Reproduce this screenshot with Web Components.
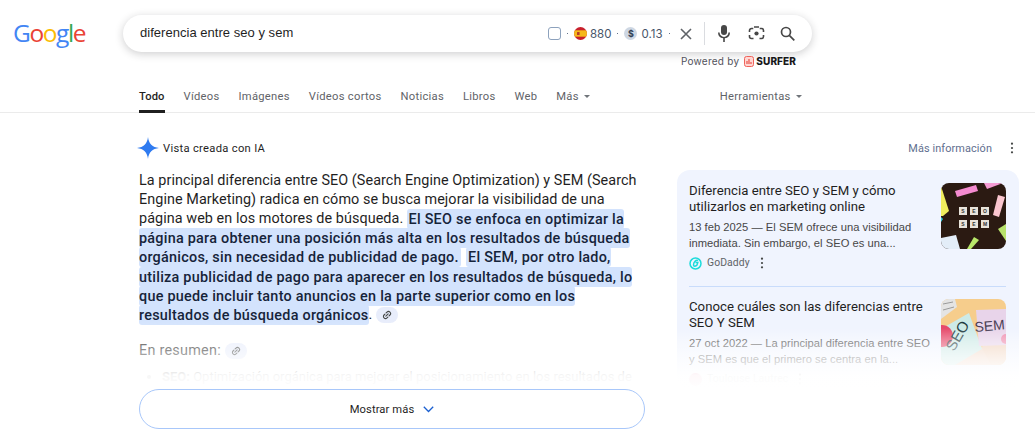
<!DOCTYPE html>
<html lang="es"><head><meta charset="utf-8"><title>diferencia entre seo y sem</title>
<style>
html,body{margin:0;padding:0;background:#fff}
body{width:1035px;height:440px;overflow:hidden;font-family:"Liberation Sans",Arial,sans-serif;color:#1f1f1f}
</style></head><body>
<g-header></g-header>
<g-tabs></g-tabs>
<g-main-row></g-main-row>
<script>
function def(name,html){customElements.define(name,class extends HTMLElement{constructor(){super();const s=this.attachShadow({mode:'open'});s.innerHTML=html;}});}
const LINK='<svg viewBox="0 0 24 24" width="10" height="10" fill="none" stroke="currentColor" stroke-width="2.6" stroke-linecap="round"><g transform="rotate(-45 12 12)"><path d="M10 7H7a5 5 0 0 0 0 10h3"/><path d="M14 7h3a5 5 0 0 1 0 10h-3"/><path d="M8 12h8"/></g></svg>';
const DOTS='<svg viewBox="0 0 4 14" width="4" height="12" fill="currentColor"><circle cx="2" cy="2" r="1.3"/><circle cx="2" cy="7" r="1.3"/><circle cx="2" cy="12" r="1.3"/></svg>';

def('g-logo',`<style>:host{display:block;width:72px;margin-left:-1px;font:500 24.500px/30px "Open Sans",sans-serif;letter-spacing:-1.400px;white-space:nowrap}</style><span style="color:#4285f4">G</span><span style="color:#ea4335">o</span><span style="color:#fbbc05">o</span><span style="color:#4285f4">g</span><span style="color:#34a853">l</span><span style="color:#ea4335">e</span>`);

def('g-search',`<style>
:host{display:flex;align-items:center;width:689px;height:37px;box-sizing:border-box;border-radius:19px;background:#fff;box-shadow:0 2px 8px rgba(32,33,36,.22);padding:0 0 0 17px}
.q{width:408px;font:13px "Liberation Sans",sans-serif;color:#1f1f1f;margin-top:-2px;letter-spacing:.03px}
.m{display:flex;align-items:center;font:11.500px Inter,sans-serif;color:#475569}
.box{width:13px;height:13px;box-sizing:border-box;border:1px solid #8da2bd;border-radius:3px}
.d{width:1px;height:1px;background:#64748b;margin:0 6px}
.coin{width:13px;height:13px;border-radius:50%;background:#ced7e3;color:#334155;font:700 9px/13px Inter,sans-serif;text-align:center;margin-right:4px}
.flag{width:13px;height:13px;border-radius:50%;margin-right:3px;display:block}
.x{display:block}
.sep{width:1px;height:23px;background:#dadce0;margin:0 12px 0 11px}
.i{display:block}
</style>
<div class="q">diferencia entre seo y sem</div>
<div class="m"><span class="box"></span><span class="d"></span>
<svg class="flag" viewBox="0 0 13 13"><rect width="13" height="13" fill="#c8202c"/><rect y="3.3" width="13" height="6.4" fill="#f5b81c"/><rect x="3" y="5" width="2.6" height="3" rx=".6" fill="#b5392b"/></svg>
<span>880</span><span class="d"></span><span class="coin">$</span><span>0.13</span><span class="d" style="margin-right:9px"></span></div>
<svg class="x" width="14" height="14" viewBox="0 0 14 14" stroke="#5f6368" stroke-width="1.600" fill="none"><path d="M2 2l10 10M12 2L2 12"/></svg>
<span class="sep"></span>
<svg class="i" width="14" height="17" viewBox="0 0 14 17" fill="#474747"><rect x="4" y="0" width="6" height="10" rx="3"/><path d="M1 7.500h1.600a4.400 4.400 0 0 0 8.800 0H13a6 6 0 0 1-5.200 5.800V17H6.200v-3.700A6 6 0 0 1 1 7.500z"/></svg>
<svg class="i" style="margin-left:17px" width="17" height="17" viewBox="0 0 17 17" fill="none" stroke="#474747" stroke-width="1.600"><path d="M1.500 7V5.500a2 2 0 0 1 2-2h1.800M6 2h5M11.700 3.500h1.800a2 2 0 0 1 2 2V7M1.500 10v1.500a2 2 0 0 0 2 2h2M15.500 10v1.500a2 2 0 0 1-2 2h-2"/><circle cx="8.500" cy="8.500" r="2.100" fill="#474747" stroke="none"/></svg>
<svg class="i" style="margin-left:15px" width="15" height="15" viewBox="0 0 15 15" fill="none" stroke="#474747" stroke-width="1.700"><circle cx="6" cy="6" r="4.500"/><path d="M9.300 9.300L14.300 14.300"/></svg>`);

def('g-powered',`<style>:host{display:flex;align-items:center;justify-content:flex-end;width:689px;height:18px;font:10px/18px Inter,sans-serif;color:#52525b;letter-spacing:.25px;box-sizing:border-box;padding-right:16px}
svg{margin:0 2px 0 5px}b{font:800 10px Inter,sans-serif;color:#18181b;letter-spacing:.1px}</style>
Powered by<svg width="10" height="11" viewBox="0 0 10 11"><rect x=".5" y=".5" width="9" height="10" rx="2" fill="#ffd7d3" stroke="#f0625a"/><path d="M3 8V5M5 8V3M7 8V6" stroke="#e8483f" stroke-width="1.100"/></svg><b>SURFER</b>`);

def('g-header',`<style>:host{display:flex;align-items:flex-start;height:75px;box-sizing:border-box;padding:15px 0 0 14px;gap:38px}
g-logo{margin-top:3px}.c{display:flex;flex-direction:column}</style>
<g-logo></g-logo><div class="c"><g-search></g-search><g-powered></g-powered></div>`);

def('g-tabs',`<style>:host{display:flex;height:38px;box-sizing:border-box;border-bottom:1px solid #ebebeb;padding-left:139px;font:11.200px "Roboto",sans-serif;color:#5f6368;letter-spacing:.28px}
span{display:block;padding-top:15px;margin-right:19px;white-space:nowrap}
.on{color:#1f1f1f;font-weight:500;border-bottom:3px solid #1f1f1f;height:20px;letter-spacing:.12px}
.car{display:inline-block;border:3px solid transparent;border-top:3.500px solid #70757a;border-bottom:0;margin-left:5px;vertical-align:2px}
.t{margin-left:111px;margin-right:0}</style>
<span class="on">Todo</span><span>Vídeos</span><span>Imágenes</span><span>Vídeos cortos</span><span>Noticias</span><span>Libros</span><span>Web</span><span>Más<i class="car"></i></span><span class="t">Herramientas<i class="car"></i></span>`);

def('g-chip',`<style>:host{display:inline-flex;align-items:center;justify-content:center;width:22px;height:16px;border-radius:8px;background:#e8edfb;color:#444746;vertical-align:-1px;margin-left:4px}</style>${LINK}`);

def('g-answer',`<style>
:host{display:block;position:relative;width:506px;height:304px;box-sizing:border-box}
.h{display:flex;align-items:center;height:24px;font:400 11.200px Roboto,sans-serif;color:#1f1f1f;letter-spacing:.3px;gap:3px;margin-left:-3px}
.t{margin-top:11px;font:14.400px/19.200px "Roboto",sans-serif;color:#1f1f1f;white-space:nowrap;letter-spacing:.06px}
mark{background:#d3e3fd;color:#16243a;border-radius:3px;padding:1.500px 0;font-weight:475;letter-spacing:.25px}
.a{margin-left:-4px;padding-left:2px}.b{padding-right:2px}.c{margin-left:-2px;padding-left:2px}
.g{margin-top:16px;color:#1f1f1f;font:14.400px/19.200px Roboto,sans-serif;letter-spacing:.25px}
ul{margin:7px 0 0;padding:0 0 0 23px;font:13px/19.200px Roboto,sans-serif;white-space:nowrap}
.fade{position:absolute;left:-4px;right:-4px;top:184px;height:120px;background:linear-gradient(to bottom,rgba(255,255,255,0) 0,rgba(255,255,255,.5) 25%,rgba(255,255,255,.96) 46%,#fff 60%)}
::slotted(g-more){position:absolute;left:0;right:0;bottom:11px}
</style>
<div class="h"><svg width="24" height="24" viewBox="0 0 24 24"><path d="M12 1c.6 6.500 4.500 10.300 11 11-6.500.7-10.400 4.500-11 11-.6-6.500-4.500-10.300-11-11 6.500-.7 10.400-4.500 11-11z" fill="#2f7bf0"/></svg>Vista creada con IA</div>
<div class="t">La principal diferencia entre SEO (Search Engine Optimization) y SEM (Search<br>
Engine Marketing) radica en cómo se busca mejorar la visibilidad de una<br>
página web en los motores de búsqueda. &nbsp;<mark class="a">El SEO se enfoca en optimizar la</mark><br>
<mark>página para obtener una posición más alta en los resultados de búsqueda</mark><br>
<mark class="b">orgánicos, sin necesidad de publicidad de pago.</mark> &nbsp;<mark class="c">El SEM, por otro lado,</mark><br>
<mark>utiliza publicidad de pago para aparecer en los resultados de búsqueda, lo</mark><br>
<mark>que puede incluir tanto anuncios en la parte superior como en los</mark><br>
<mark>resultados de búsqueda orgánicos</mark>.<g-chip></g-chip></div>
<div class="g">En resumen:<g-chip></g-chip></div>
<ul><li><b>SEO:</b> Optimización orgánica para mejorar el posicionamiento en los resultados de</li></ul>
<div class="fade"></div><slot></slot>`);

def('g-more',`<style>:host{display:flex;align-items:center;justify-content:center;height:38px;border:1px solid #a8c7fa;border-radius:20px;background:#fff;font:11.200px Roboto,sans-serif;color:#1f1f1f;gap:9px;letter-spacing:.1px}</style>Mostrar más<svg width="11" height="7" viewBox="0 0 11 7" fill="none" stroke="#1a5fd0" stroke-width="1.300"><path d="M.8.8l4.700 4.700L10.200.8"/></svg>`);

def('g-source',`<style>
:host{display:flex;gap:10px;width:317px;height:103px;box-sizing:border-box}
.b{flex:1;min-width:0}
.ti{font:13.200px/16px Roboto,sans-serif;color:#1f1f1f;white-space:nowrap;letter-spacing:.02px}
.s{margin-top:4px;font:11.200px/16px "Liberation Sans",sans-serif;color:#474747;white-space:nowrap;letter-spacing:.02px}
.f{display:flex;align-items:center;margin-top:5px;font:10.400px/14px Roboto,sans-serif;color:#5f6368;letter-spacing:.1px;height:14px}
.f .m{margin-left:10px;color:#444746;display:flex}
::slotted(svg[slot=th]){display:block;border-radius:8px}
.th{width:65px;height:66px;flex:none}
</style>
<div class="b"><div class="ti"><slot name="title"></slot></div><div class="s"><slot name="snip"></slot></div><div class="f"><slot name="ic"></slot><slot name="site"></slot><span class="m">${DOTS}</span></div></div>
<div class="th"><slot name="th"></slot></div>`);

def('g-side',`<style>
:host{display:block;position:relative;width:342px;height:254px}
.top{display:flex;justify-content:flex-end;align-items:center;height:24px;font:10.900px Roboto,sans-serif;color:#5f6f8f;letter-spacing:.1px;gap:18px;padding-right:5px}
.top span{display:flex;color:#444746}
.card{margin-top:10px;background:#f0f4fe;border-radius:13px;padding:13px 13px 0 12px;height:220px;box-sizing:border-box;position:relative}
.fade{position:absolute;left:0;right:0;bottom:0;height:62px;background:linear-gradient(to bottom,rgba(255,255,255,0) 0,rgba(255,255,255,.38) 22%,rgba(255,255,255,.7) 48%,rgba(255,255,255,.97) 76%,#fff 100%)}
</style>
<div class="top">Más información<span>${DOTS}</span></div>
<div class="card"><slot></slot><div class="fade"></div></div>`);

def('g-main-row',`<style>
:host{display:flex;padding:23px 0 0 139px;gap:32px;align-items:flex-start}
hr{border:0;border-top:1px solid #c9dcfb;margin:0 0 12px;width:317px}
.l{margin-right:5px;display:block}
</style>
<g-answer><g-more></g-more></g-answer>
<g-side>
<g-source>
<span slot="title">Diferencia entre SEO y SEM y cómo<br>utilizarlos en marketing online</span>
<span slot="snip">13 feb 2025 — El SEM ofrece una visibilidad<br>inmediata. Sin embargo, el SEO es una...</span>
<svg slot="ic" class="l" width="13" height="13" viewBox="0 0 13 13" fill="none" stroke="#1bdbdb" stroke-width="1.500"><circle cx="6.500" cy="6.500" r="5.500"/><path d="M9 3.500C7 2.500 4.500 5 4.500 8c0 1.500 2.500 1.500 3.500 0l.8-2.500H6.500"/></svg>
<span slot="site">GoDaddy</span>
<svg slot="th" width="65" height="66" viewBox="0 0 65 66"><rect width="65" height="66" fill="#2b1a12"/>
<polygon points="14,8 35,2 37,8 16,14" fill="#f58bd0"/><polygon points="43,0 62,0 46,6" fill="#f49bd4"/><polygon points="57,12 64,14 58,34 52,32" fill="#fbc6cf"/>
<polygon points="0,3 8,28 2,33 0,33" fill="#f0ee5e"/><polygon points="0,34 2,36 0,39" fill="#30d0e0"/><polygon points="0,55 15,52 19,66 0,66" fill="#e3edf8"/>
<polygon points="33,54 38,57 30,66 26,66" fill="#b9e86a"/><polygon points="57,46 65,41 65,58" fill="#b8e26b"/>
<g fill="#e8e3da"><rect x="18" y="24" width="8" height="8"/><rect x="29" y="24" width="8" height="8"/><rect x="40" y="24" width="8" height="8"/><rect x="18" y="37" width="8" height="8"/><rect x="29" y="37" width="8" height="8"/><rect x="40" y="37" width="8" height="8"/></g>
<g fill="#333" font-family="Liberation Sans" font-size="5" font-weight="700" text-anchor="middle"><text x="22" y="30">S</text><text x="33" y="30">E</text><text x="44" y="30">O</text><text x="22" y="43">S</text><text x="33" y="43">E</text><text x="44" y="43">M</text></g></svg>
</g-source>
<hr>
<g-source>
<span slot="title">Conoce cuáles son las diferencias entre<br>SEO Y SEM</span>
<span slot="snip">27 oct 2022 — La principal diferencia entre SEO<br>y SEM es que el primero se centra en la...</span>
<svg slot="ic" class="l" width="13" height="13" viewBox="0 0 13 13"><circle cx="6.500" cy="6.500" r="6.500" fill="#d9306c"/></svg>
<span slot="site">Toulouse Lautrec</span>
<svg slot="th" width="65" height="66" viewBox="0 0 65 66"><rect width="65" height="66" fill="#f6cd8c"/>
<polygon points="0,0 14,0 16,8 0,20" fill="#e4e4e4"/><path d="M2 5l10-2M2 11l11-3" stroke="#9a9a9a"/>
<polygon points="35,66 42,46 65,44 65,66" fill="#f0d2bc"/><polygon points="12,66 36,40 50,66" fill="#f1d6c4"/>
<polygon points="0,30 28,14 41,50 14,66 0,66" fill="#cdeae7"/>
<polygon points="35,11 65,10 65,46 38,47" fill="#e8d4ea"/>
<circle cx="1" cy="37" r="11" fill="#e64a6b"/><circle cx="65" cy="40" r="5" fill="#ef8fb0"/>
<text x="34" y="33" font-family="Liberation Sans" font-size="14" fill="#4a3f55" transform="rotate(-5 34 33)">SEM</text>
<text x="13" y="53" font-family="Liberation Sans" font-size="15" fill="#1f3a40" transform="rotate(-60 13 53)">SEO</text></svg>
</g-source>
</g-side>`);
</script>
</body></html>
